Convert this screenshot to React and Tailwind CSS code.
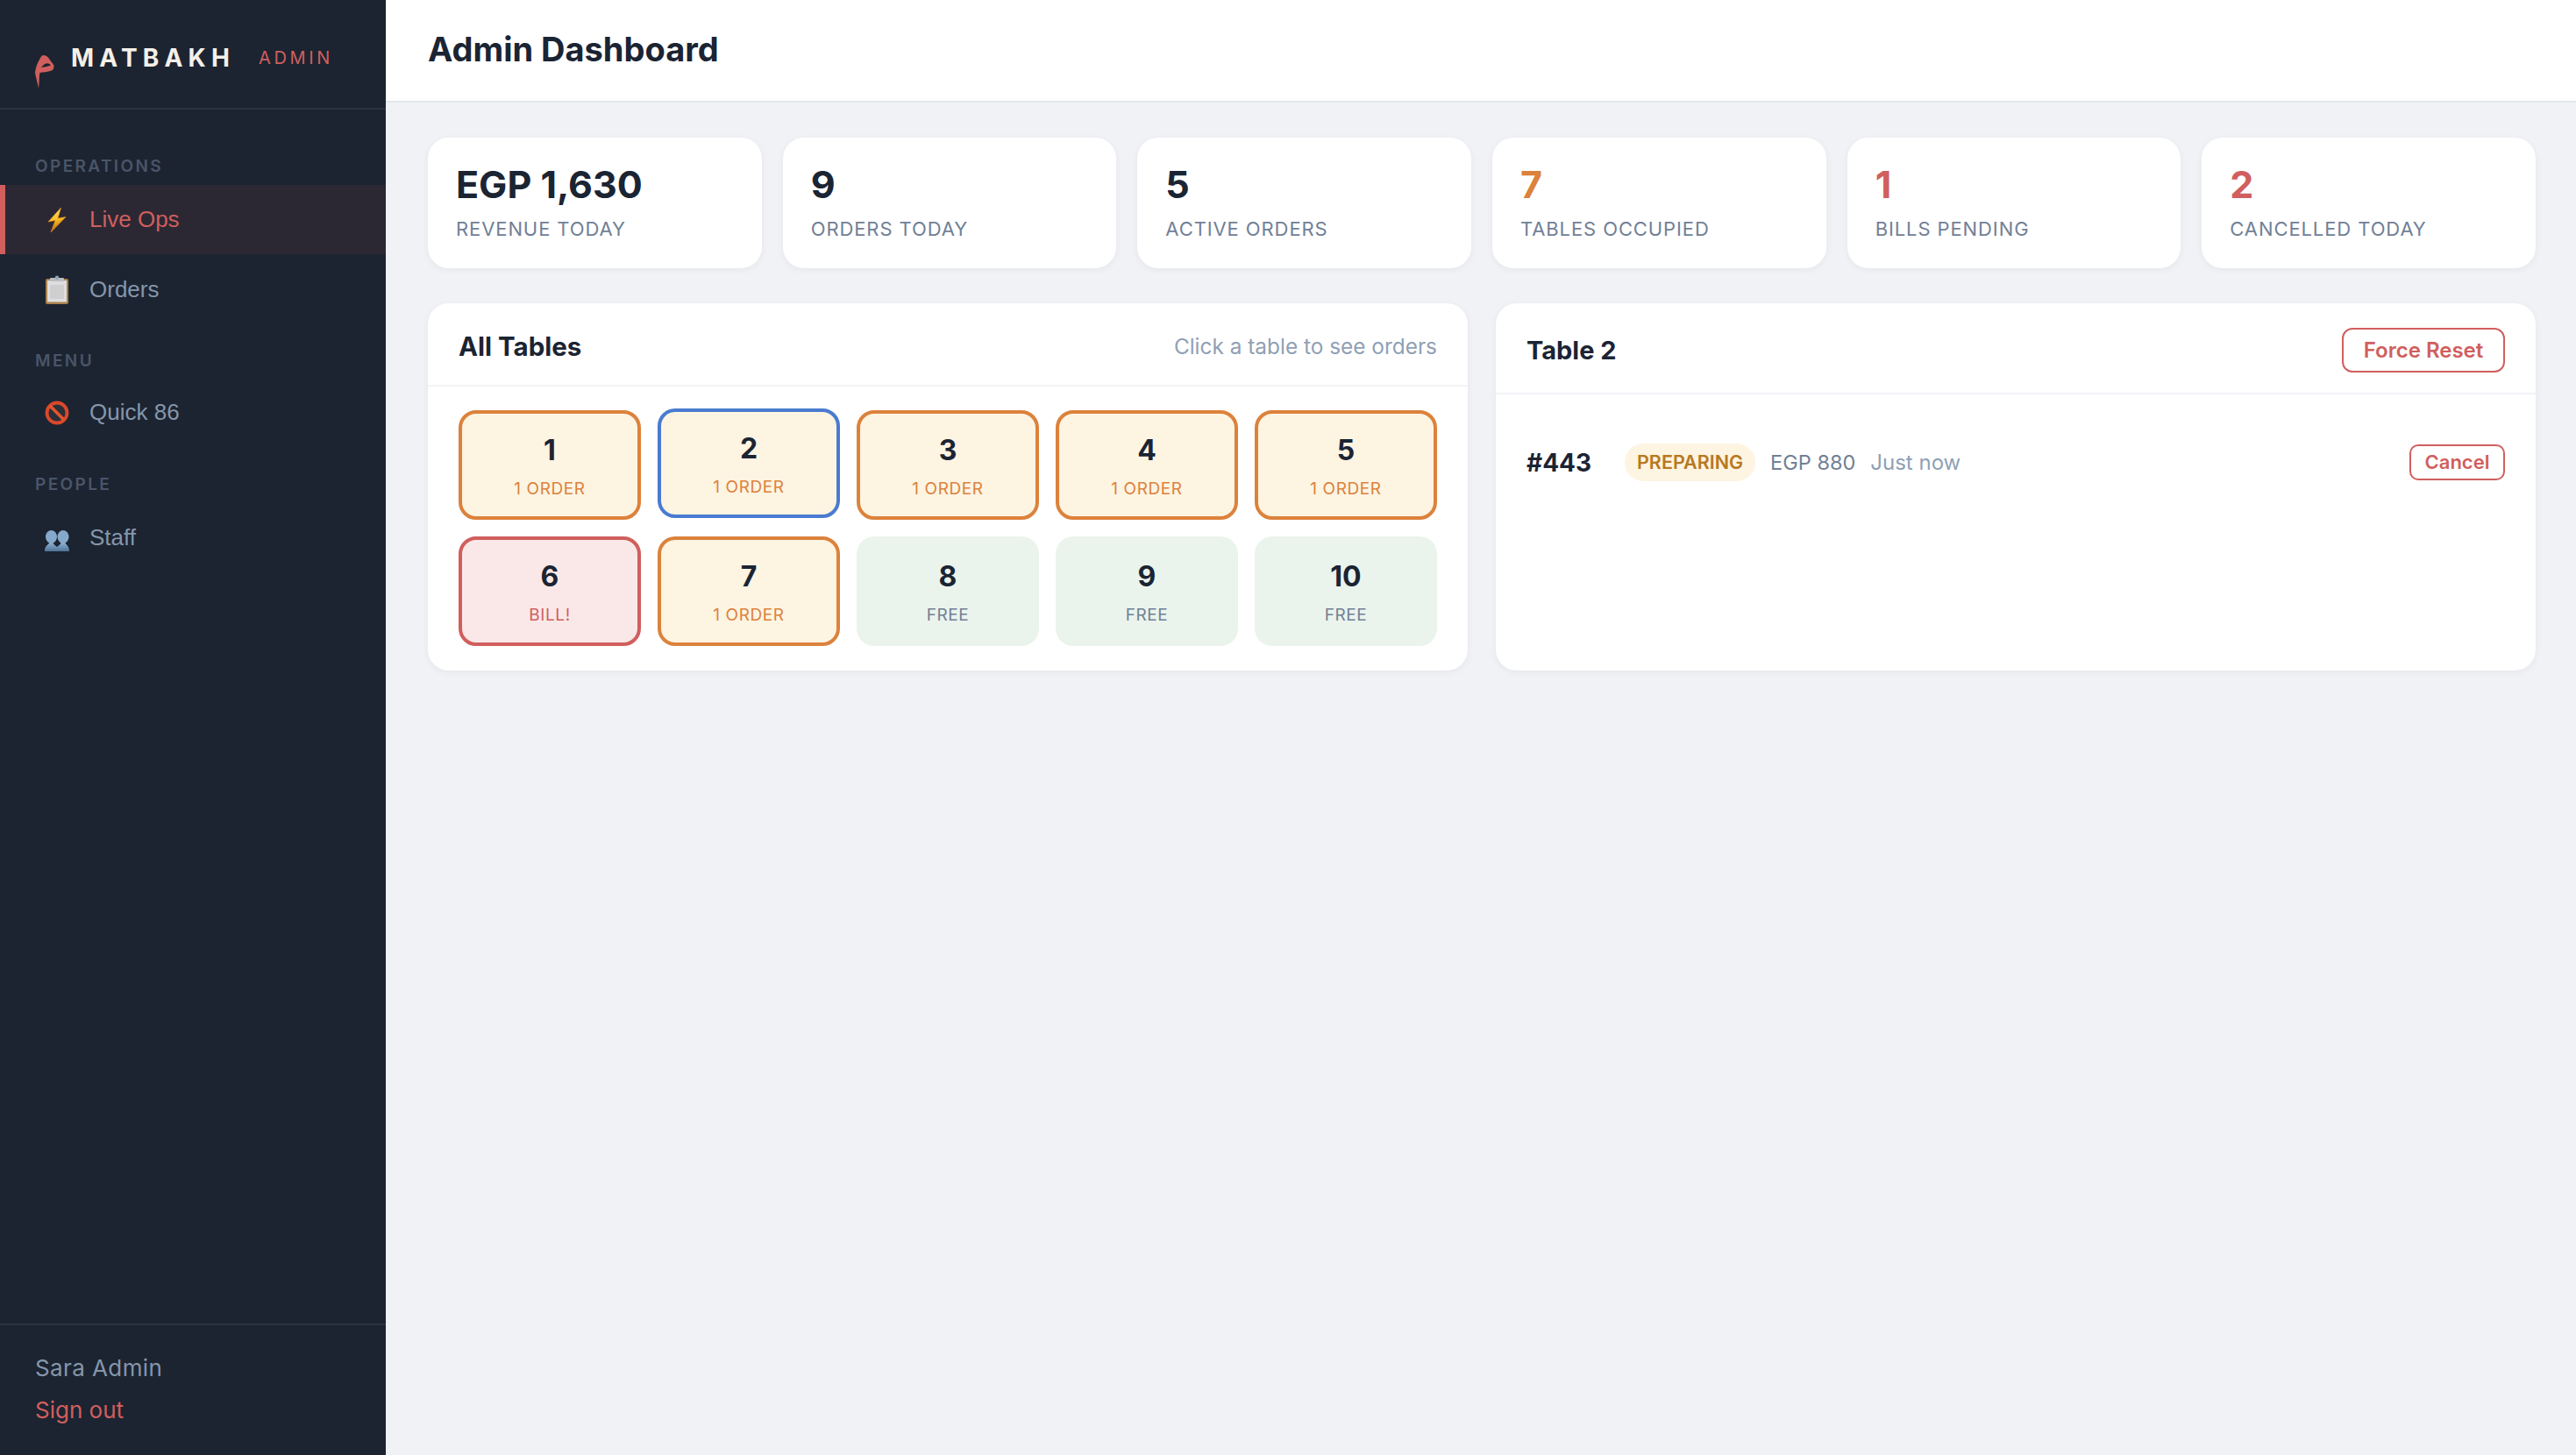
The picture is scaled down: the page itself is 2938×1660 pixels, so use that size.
import React from "react";

const poppins = "font-['Inter','Open_Sans',sans-serif]";

function BoltIcon() {
  return (
    <svg width="34" height="34" viewBox="0 0 34 34">
      <defs>
        <linearGradient id="bolt" x1="0" y1="0" x2="0.2" y2="1">
          <stop offset="0" stopColor="#fde68a" />
          <stop offset="0.55" stopColor="#fbbf24" />
          <stop offset="1" stopColor="#b8651b" />
        </linearGradient>
      </defs>
      <path d="M21.5 3 L7 19 L15 17.5 L10 31 L27 13.5 L18 15 Z" fill="url(#bolt)" stroke="#e58f1c" strokeWidth="0.6" />
    </svg>
  );
}

function ClipboardIcon() {
  return (
    <svg width="34" height="34" viewBox="0 0 34 34">
      <rect x="4" y="4" width="26" height="29" rx="2" fill="#a9824f" />
      <rect x="6" y="6" width="22" height="24.5" fill="#dedede" />
      <rect x="9" y="11" width="16" height="16" fill="#cfcfcf" />
      <rect x="9" y="3" width="16" height="4" rx="1" fill="#b9bec4" />
      <circle cx="17" cy="2.8" r="2.2" fill="#9aa3ad" />
    </svg>
  );
}

function NoEntryIcon() {
  return (
    <svg width="34" height="34" viewBox="0 0 34 34">
      <circle cx="17" cy="17" r="11.5" fill="#2a2f38" stroke="#d9482a" strokeWidth="3.8" />
      <path d="M9 9 L25 25" stroke="#e2552f" strokeWidth="3.8" />
    </svg>
  );
}

function StaffIcon() {
  return (
    <svg width="34" height="34" viewBox="0 0 34 34">
      <defs>
        <linearGradient id="bust" x1="0" y1="0" x2="0" y2="1">
          <stop offset="0" stopColor="#8fb2d3" />
          <stop offset="1" stopColor="#4f7397" />
        </linearGradient>
      </defs>
      <ellipse cx="10.5" cy="15.5" rx="6.5" ry="7.5" fill="#86a9cb" />
      <ellipse cx="24" cy="15.5" rx="6.5" ry="7.5" fill="#86a9cb" />
      <path d="M3 32 C3 26 6 25 9 22 L12 22 C14 25 16 26 17 27 C18 26 20 25 22 22 L26 22 C28 25 31 26 31 32 Z" fill="url(#bust)" />
    </svg>
  );
}

function NavItem({ icon, label, active }) {
  return (
    <div
      className={
        "flex items-center gap-[20px] h-[79px] pl-[42px] border-l-[6px] text-[26px] font-['Liberation_Sans',sans-serif] " +
        (active
          ? "border-[#d05f5e] bg-[#2c2833] text-[#d05f5e]"
          : "border-transparent text-[#8596ab]")
      }
    >
      {icon}
      <span>{label}</span>
    </div>
  );
}

function SectionLabel({ children, className }) {
  return (
    <div className={"px-[40px] text-[19px] font-semibold tracking-[2.4px] leading-[24px] text-[#4a5568] " + poppins + " " + className}>
      {children}
    </div>
  );
}

function Sidebar() {
  return (
    <aside className={"w-[440px] shrink-0 h-full flex flex-col bg-[#1c2431] " + poppins}>
      <div className="h-[125px] shrink-0 border-b-2 border-[#2b3342] flex items-start pl-[39px] pt-[49px]">
        <svg width="24" height="40" viewBox="9 12 24 40" className="mt-[13px]">
          <path d="M10 33 C10.5 28 12 24 13 22 C15 18 17 13 19.5 13 C22 13 24 14 26 17 C28 20 31 23 31.5 25 C31.5 28 30.5 30 29 30.5 C24 32 19 32.5 15.5 33 C14.5 36 15 44 14 50.5 C13 46 11 38 10 33 Z M17 27 C21 26.5 25 25.5 28 24.5 C25 21 21 21.5 17 27 Z" fill="#d05f5e" fillRule="evenodd" />
        </svg>
        <span className="ml-[18px] text-[28px] leading-[34px] font-bold tracking-[6.2px] text-[#f5f0e8]">MATBAKH</span>
        <span className="ml-[27px] mt-[3px] text-[20px] leading-[28px] tracking-[3.6px] text-[#d05f5e]">ADMIN</span>
      </div>
      <div className="flex-1 pt-[53px]">
        <SectionLabel className="mb-[9px]">OPERATIONS</SectionLabel>
        <NavItem active icon={<BoltIcon />} label="Live Ops" />
        <div className="pt-[1px]">
          <NavItem icon={<ClipboardIcon />} label="Orders" />
        </div>
        <SectionLabel className="mt-[30px] mb-[7px]">MENU</SectionLabel>
        <NavItem icon={<NoEntryIcon />} label="Quick 86" />
        <SectionLabel className="mt-[31px] mb-[9px]">PEOPLE</SectionLabel>
        <NavItem icon={<StaffIcon />} label="Staff" />
      </div>
      <div className="h-[150px] shrink-0 border-t-2 border-[#2b3342] px-[40px] pt-[31px] text-[26px]">
        <div className="leading-[36px] tracking-[0.4px] text-[#8596ab]">Sara Admin</div>
        <div className="mt-[12px] leading-[36px] text-[#d05f5e]">Sign out</div>
      </div>
    </aside>
  );
}

function StatCard({ value, label, color }) {
  return (
    <div className="h-[149px] bg-white rounded-[24px] shadow-[0_2px_8px_rgba(0,0,0,0.05)] px-[32px] pt-[26px]">
      <div className={"text-[43px] leading-[54px] font-bold " + color}>{value}</div>
      <div className="mt-[9px] text-[22px] leading-[30px] tracking-[0.9px] text-[#718096]">{label}</div>
    </div>
  );
}

function Tile({ num, label, kind, selected }) {
  let box = "bg-[#fdf4e2] border-[4px] border-[#dc823c]";
  let text = "text-[#dc823c]";
  if (kind === "bill") {
    box = "bg-[#fae8e8] border-[4px] border-[#d05f5e]";
    text = "text-[#d05f5e]";
  }
  if (kind === "free") {
    box = "bg-[#eaf4ec]";
    text = "text-[#718096]";
  }
  if (selected) {
    box = "bg-[#fdf4e2] border-[4px] border-[#4a7bd0] -translate-y-[2px]";
  }
  return (
    <div className={"h-[125px] rounded-[20px] flex flex-col items-center justify-center pt-[3px] " + box}>
      <div className="text-[32px] leading-[40px] font-bold text-[#1b2433]">{num}</div>
      <div className={"mt-[11px] text-[19px] leading-[26px] tracking-[0.6px] " + text}>{label}</div>
    </div>
  );
}

const tables = [
  { num: 1, label: "1 ORDER" },
  { num: 2, label: "1 ORDER", selected: true },
  { num: 3, label: "1 ORDER" },
  { num: 4, label: "1 ORDER" },
  { num: 5, label: "1 ORDER" },
  { num: 6, label: "BILL!", kind: "bill" },
  { num: 7, label: "1 ORDER" },
  { num: 8, label: "FREE", kind: "free" },
  { num: 9, label: "FREE", kind: "free" },
  { num: 10, label: "FREE", kind: "free" },
];

const stats = [
  { value: "EGP 1,630", label: "REVENUE TODAY", color: "text-[#1b2433]" },
  { value: "9", label: "ORDERS TODAY", color: "text-[#1b2433]" },
  { value: "5", label: "ACTIVE ORDERS", color: "text-[#1b2433]" },
  { value: "7", label: "TABLES OCCUPIED", color: "text-[#dc823c]" },
  { value: "1", label: "BILLS PENDING", color: "text-[#d05f5e]" },
  { value: "2", label: "CANCELLED TODAY", color: "text-[#d05f5e]" },
];

export default function App() {
  return (
    <div className={"w-full h-screen flex overflow-hidden bg-[#f0f2f6] " + poppins}>
      <Sidebar />
      <main className="flex-1 min-w-0 flex flex-col">
        <header className="h-[117px] shrink-0 bg-white border-b-2 border-[#e3e7ec] flex items-center pl-[48px] pr-[46px] pb-[3px]">
          <h1 className="text-[38px] font-bold text-[#1b2433]">Admin Dashboard</h1>
        </header>
        <div className="pl-[48px] pr-[46px] pt-[40px]">
          <div className="grid grid-cols-6 gap-[24px]">
            {stats.map((s) => (
              <StatCard key={s.label} {...s} />
            ))}
          </div>
          <div className="mt-[40px] grid grid-cols-2 gap-[32px] h-[419px]">
            <section className="bg-white rounded-[24px] shadow-[0_2px_8px_rgba(0,0,0,0.05)]">
              <div className="h-[95px] border-b-2 border-[#f2f3f7] flex items-center justify-between px-[35px] pt-[5px]">
                <span className="text-[29.5px] font-bold text-[#1b2433]">All Tables</span>
                <span className="text-[24.4px] text-[#8fa0b5]">Click a table to see orders</span>
              </div>
              <div className="grid grid-cols-5 gap-[19px] px-[35px] pt-[27px]">
                {tables.map((t) => (
                  <Tile key={t.num} {...t} />
                ))}
              </div>
            </section>
            <section className="bg-white rounded-[24px] shadow-[0_2px_8px_rgba(0,0,0,0.05)]">
              <div className="h-[104px] border-b-2 border-[#f2f3f7] flex items-center justify-between px-[35px] pt-[5px]">
                <span className="text-[29px] font-bold text-[#1b2433]">Table 2</span>
                <button className="h-[51px] w-[186px] rounded-[12px] border-2 border-[#d05f5e] bg-white text-[24px] font-semibold text-[#d05f5e]">
                  Force Reset
                </button>
              </div>
              <div className="flex items-center px-[35px] pt-[56px]">
                <span className="w-[112px] text-[28px] font-bold text-[#1b2433]">#443</span>
                <span className="h-[43px] px-[14px] rounded-full bg-[#fdf4e2] flex items-center text-[21.5px] font-semibold text-[#b7791f]">PREPARING</span>
                <span className="ml-[17px] text-[23.5px] text-[#718096]">EGP 880</span>
                <span className="ml-[17px] text-[24px] text-[#8fa0b5]">Just now</span>
                <button className="ml-auto h-[41px] w-[109px] rounded-[10px] border-2 border-[#d05f5e] bg-white text-[22px] font-semibold text-[#d05f5e]">
                  Cancel
                </button>
              </div>
            </section>
          </div>
        </div>
      </main>
    </div>
  );
}
